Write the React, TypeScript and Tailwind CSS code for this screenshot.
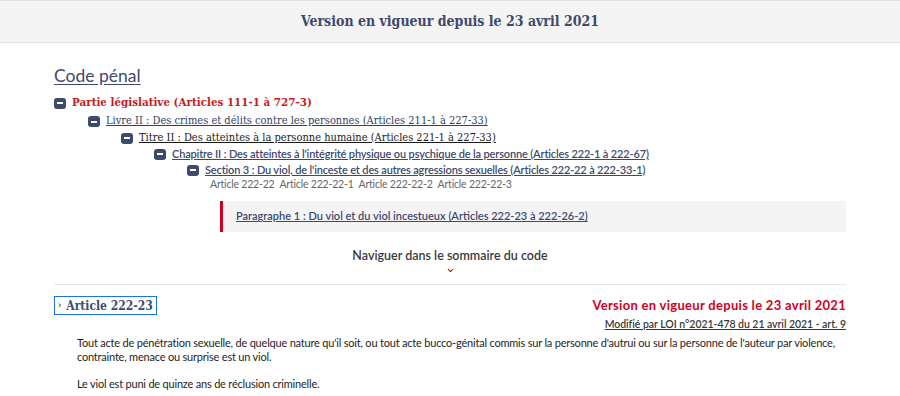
import { ChevronDown } from "lucide-react";

const slab = "font-['DejaVu_Serif',serif] [font-stretch:condensed]";
const sans = "font-['Lato',sans-serif]";

const Minus = () => (
  <span className="mr-[6px] flex h-[11px] w-[12px] shrink-0 items-center justify-center rounded-[3px] bg-[#3e4a6b]">
    <span className="h-[2px] w-[6px] bg-white" />
  </span>
);

const articles = ["Article 222-22", "Article 222-22-1", "Article 222-22-2", "Article 222-22-3"];

export default function App() {
  return (
    <div className="h-[396px] w-[900px] overflow-hidden bg-white text-[#1e1e1e]">
      <div className="flex h-[43px] items-center justify-center border-y border-[#e2e2e2] bg-[#f4f4f4]">
        <span className={`${slab} text-[14px] font-bold text-[#3e4a6b]`}>
          Version en vigueur depuis le 23 avril 2021
        </span>
      </div>

      <div className="px-[54px]">
        <div className="mt-[23px] flex h-[20px] items-center">
          <span className={`${sans} text-[17.5px] text-[#3e4a6b] underline underline-offset-2`}>Code pénal</span>
        </div>

        <div className="mt-[7px] flex h-[20px] items-center">
          <Minus />
          <span className={`${slab} text-[11.5px] font-bold text-[#c9191e]`}>
            Partie législative (Articles 111-1 à 727-3)
          </span>
        </div>
        <div className="flex h-[17px] items-center pl-[34px]">
          <Minus />
          <a className={`${slab} text-[11px] text-[#34405e] underline`}>
            Livre II : Des crimes et délits contre les personnes (Articles 211-1 à 227-33)
          </a>
        </div>
        <div className="flex h-[16px] items-center pl-[67px]">
          <Minus />
          <a className={`${slab} text-[11px] text-[#1a1a1a] underline`}>
            Titre II : Des atteintes à la personne humaine (Articles 221-1 à 227-33)
          </a>
        </div>
        <div className="flex h-[16px] items-center pl-[100px]">
          <Minus />
          <a className={`${sans} text-[11px] font-semibold tracking-[-0.15px] text-[#3e4a6b] underline`}>
            Chapitre II : Des atteintes à l'intégrité physique ou psychique de la personne (Articles 222-1 à 222-67)
          </a>
        </div>
        <div className="flex h-[16px] items-center pl-[133px]">
          <Minus />
          <a className={`${sans} text-[11px] font-semibold tracking-[-0.15px] text-[#3e4a6b] underline`}>
            Section 3 : Du viol, de l'inceste et des autres agressions sexuelles (Articles 222-22 à 222-33-1)
          </a>
        </div>
        <div className={`${sans} flex h-[14px] items-center gap-[5px] pl-[156px] text-[10.5px] tracking-[-0.2px] text-[#666]`}>
          {articles.map((a) => (
            <span key={a}>{a}</span>
          ))}
        </div>

        <div className="ml-[166px] mt-[9px] flex h-[31px] items-center border-l-[3px] border-[#d1001f] bg-[#f4f4f4] pl-[13px]">
          <a className={`${sans} text-[11px] font-semibold text-[#3e4a6b] underline`}>
            Paragraphe 1 : Du viol et du viol incestueux (Articles 222-23 à 222-26-2)
          </a>
        </div>

        <div className="mt-[14px] flex flex-col items-center">
          <span className={`${sans} text-[12.5px] font-semibold leading-[20px] text-[#3a3a3a]`}>
            Naviguer dans le sommaire du code
          </span>
          <ChevronDown size={9} strokeWidth={3} className="text-[#d1001f]" />
        </div>

        <div className="mt-[9px] border-t border-[#e5e5e5]" />

        <div className="mt-[11px] flex items-start justify-between">
          <div className={`${slab} flex h-[19px] items-center gap-[5px] border-[1.5px] border-[#1a73e8] px-[3px] text-[12px] font-bold text-[#3e4a6b]`}>
            <span className="text-[9px]">›</span>
            Article 222-23
          </div>
          <div className="flex flex-col items-end">
            <span className={`${sans} text-[13px] font-bold leading-[18px] tracking-[0.3px] text-[#d1001f]`}>
              Version en vigueur depuis le 23 avril 2021
            </span>
            <a className={`${sans} mt-[2px] text-[10.5px] font-semibold leading-[16px] tracking-[-0.05px] text-[#3a3a3a] underline`}>
              Modifié par LOI n°2021-478 du 21 avril 2021 - art. 9
            </a>
          </div>
        </div>

        <div className={`${sans} pl-[23px] pt-[4px] text-[11px] leading-[14px] tracking-[-0.2px] text-[#1e1e1e]`}>
          <p>
            Tout acte de pénétration sexuelle, de quelque nature qu'il soit, ou tout acte bucco-génital commis sur la personne d'autrui ou sur la personne de l'auteur par violence, contrainte, menace ou surprise est un viol.
          </p>
          <p className="mt-[13px]">Le viol est puni de quinze ans de réclusion criminelle.</p>
        </div>
      </div>
    </div>
  );
}
